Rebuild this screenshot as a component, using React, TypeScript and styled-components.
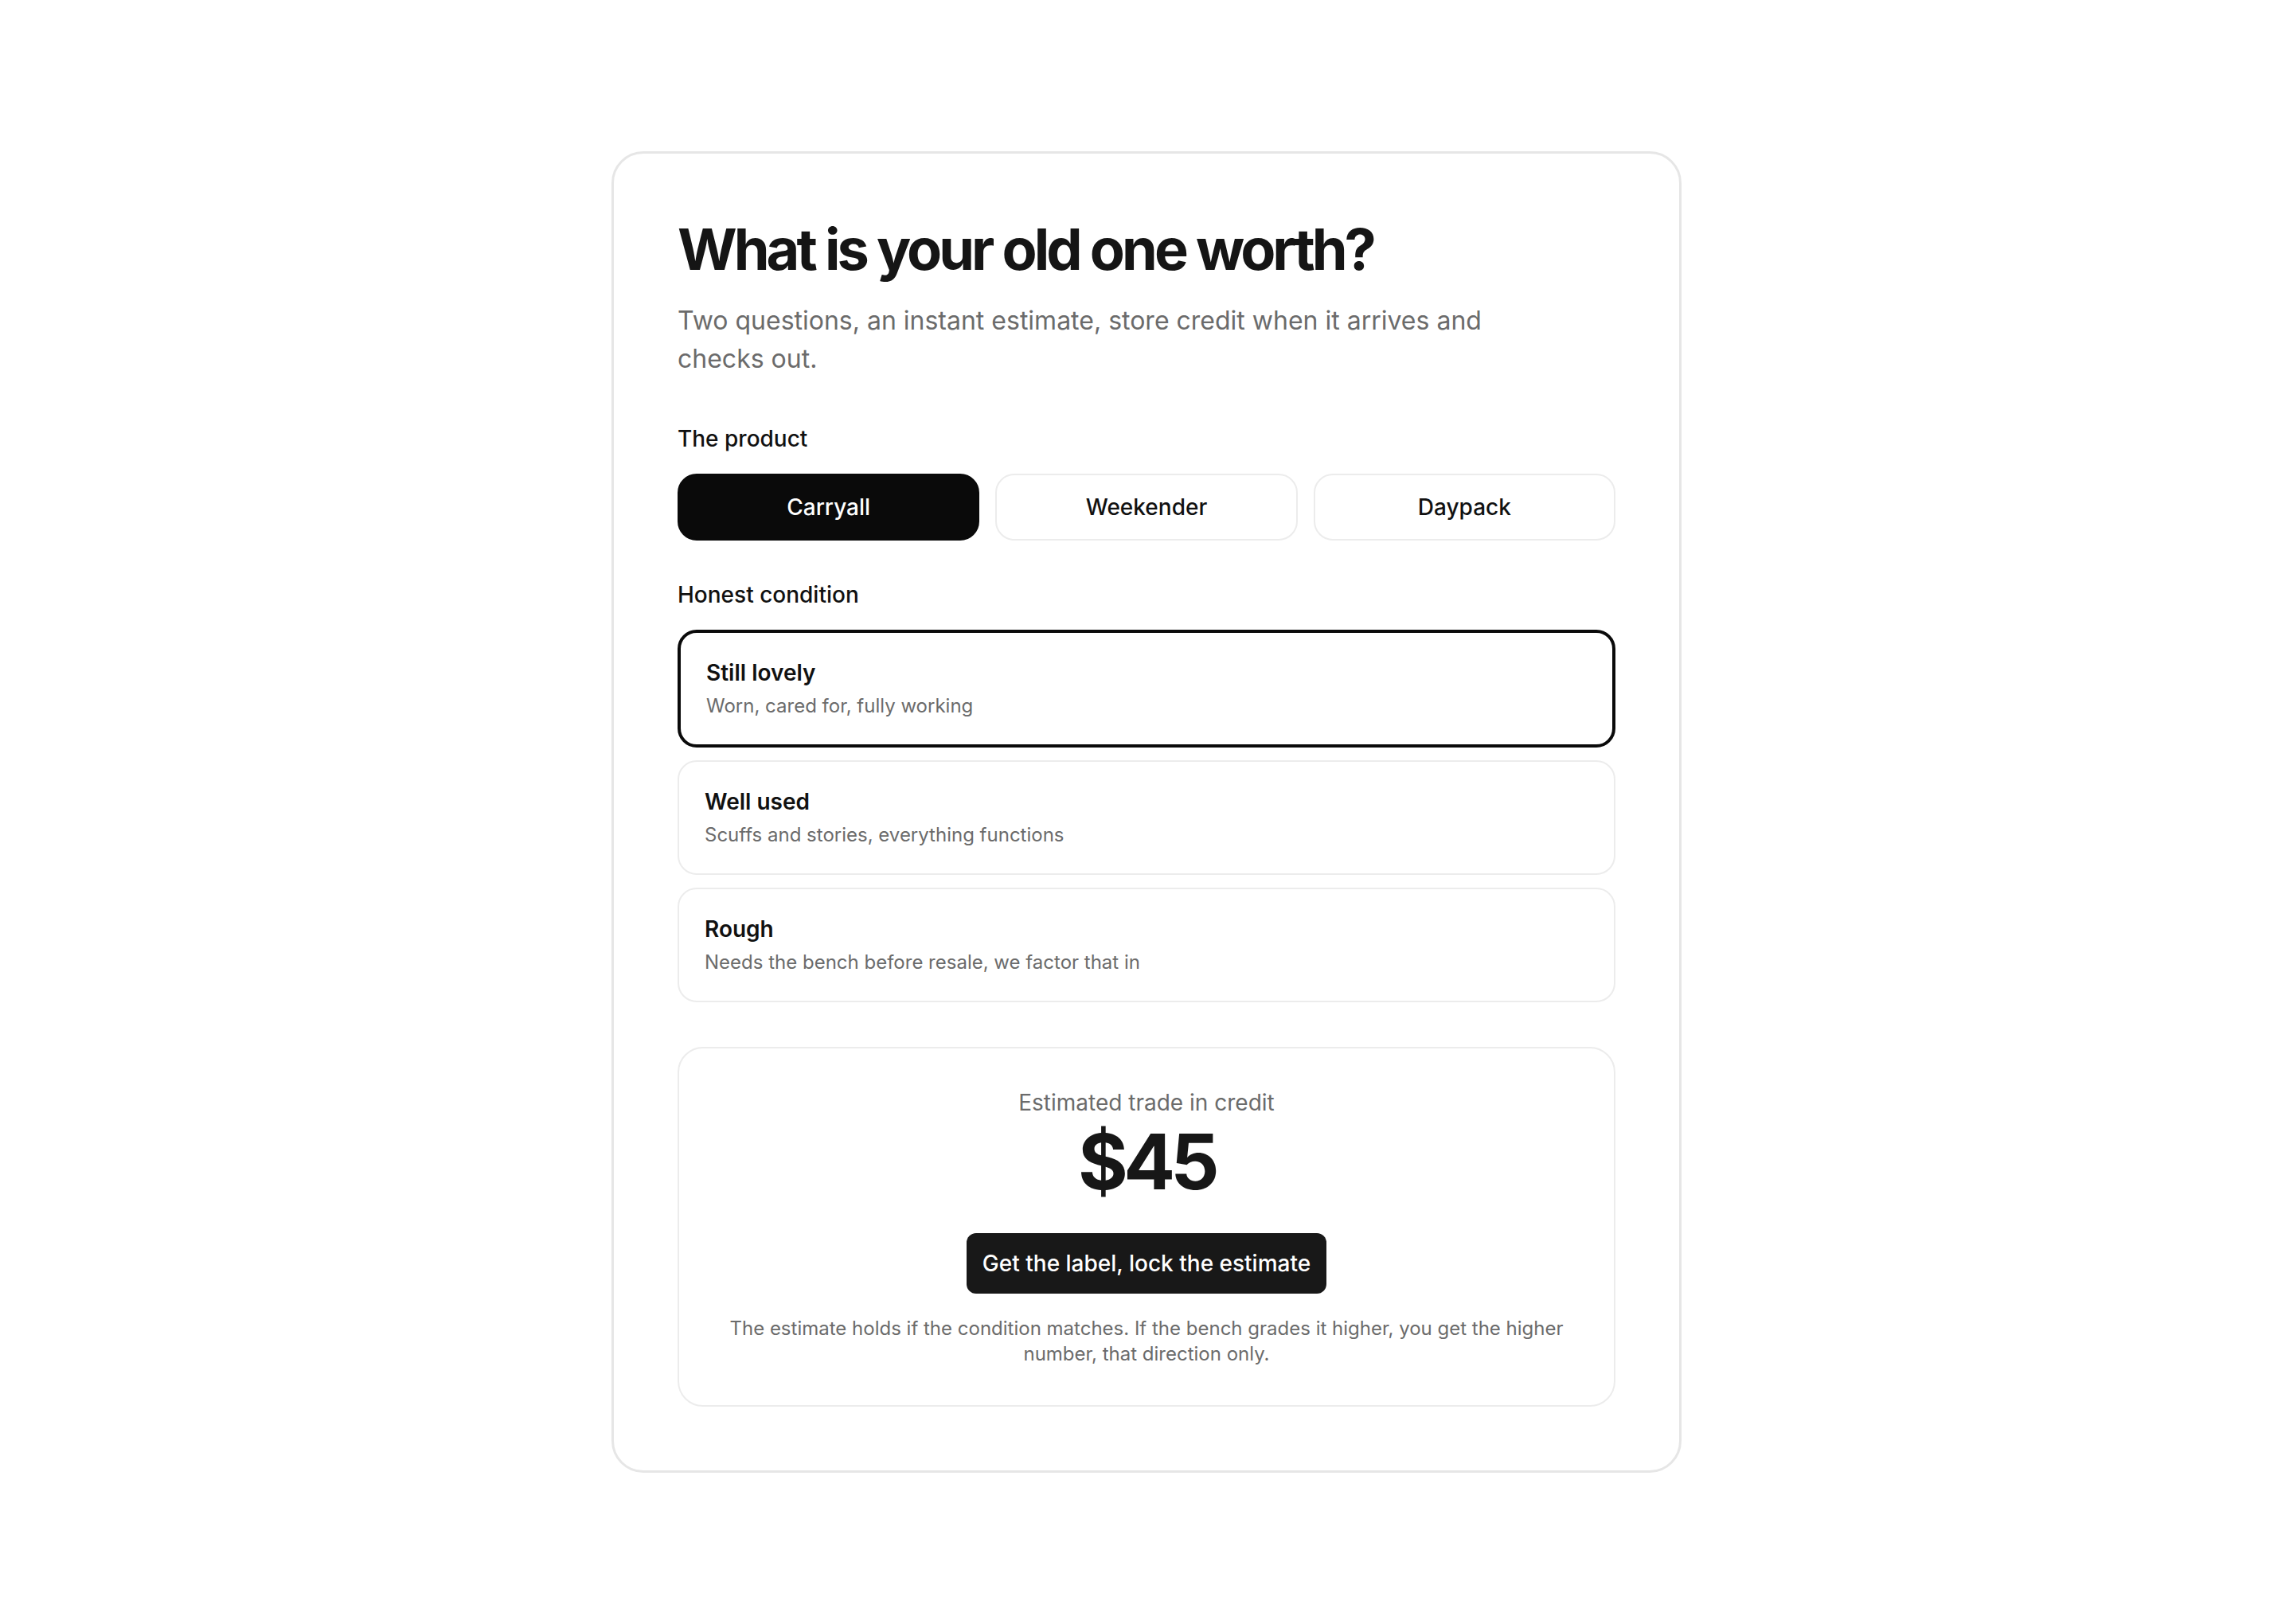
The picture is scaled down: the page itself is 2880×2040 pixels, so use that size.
import React, { useState } from "react";
import styled, { createGlobalStyle } from "styled-components";

const GlobalStyle = createGlobalStyle`
  * { box-sizing: border-box; }
  html, body {
    margin: 0;
    padding: 0;
    background: #ffffff;
    font-family: Inter, "Noto Sans", sans-serif;
    color: #111111;
  }
`;

const products = ["Carryall", "Weekender", "Daypack"];

const conditions = [
  { title: "Still lovely", text: "Worn, cared for, fully working", value: 45 },
  { title: "Well used", text: "Scuffs and stories, everything functions", value: 30 },
  { title: "Rough", text: "Needs the bench before resale, we factor that in", value: 15 },
];

const App = () => {
  const [product, setProduct] = useState<string>("Carryall");
  const [condition, setCondition] = useState<number>(0);

  return (
    <Page>
      <GlobalStyle />
      <Card>
        <Title>What is your old one worth?</Title>
        <Lead>
          Two questions, an instant estimate, store credit when it arrives and
          checks out.
        </Lead>

        <Section>
          <Label>The product</Label>
          <ProductRow>
            {products.map((p) => (
              <ProductButton
                key={p}
                type="button"
                $active={p === product}
                onClick={() => setProduct(p)}
              >
                {p}
              </ProductButton>
            ))}
          </ProductRow>
        </Section>

        <Section>
          <Label>Honest condition</Label>
          <ConditionList>
            {conditions.map((c, i) => (
              <ConditionCard
                key={c.title}
                type="button"
                $active={i === condition}
                onClick={() => setCondition(i)}
              >
                <ConditionTitle>{c.title}</ConditionTitle>
                <ConditionText>{c.text}</ConditionText>
              </ConditionCard>
            ))}
          </ConditionList>
        </Section>

        <Estimate>
          <EstimateLabel>Estimated trade in credit</EstimateLabel>
          <Amount>${conditions[condition].value}</Amount>
          <CtaButton type="button">Get the label, lock the estimate</CtaButton>
          <Note>
            The estimate holds if the condition matches. If the bench grades it
            higher, you get the higher number, that direction only.
          </Note>
        </Estimate>
      </Card>
    </Page>
  );
};

const Page = styled.div`
  min-height: 100vh;
  display: flex;
  align-items: center;
  justify-content: center;
`;

const Card = styled.div`
  width: 1344px;
  padding: 80px;
  border: 3px solid #e6e6e6;
  border-radius: 40px;
  background: #fff;
  display: flex;
  flex-direction: column;
`;

const Title = styled.h1`
  margin: 0;
  font-size: 72px;
  line-height: 1.1;
  font-weight: 700;
  letter-spacing: -0.055em;
  color: #151515;
`;

const Lead = styled.p`
  margin: 27px 0 0;
  max-width: 1080px;
  font-size: 32px;
  line-height: 48px;
  color: #6b6b6b;
`;

const Section = styled.div`
  margin-top: 56px;
  display: flex;
  flex-direction: column;
  gap: 24px;

  & + & {
    margin-top: 48px;
  }
`;

const Label = styled.div`
  font-size: 28px;
  line-height: 40px;
  font-weight: 500;
  color: #111;
`;

const ProductRow = styled.div`
  display: grid;
  grid-template-columns: repeat(3, 1fr);
  gap: 20px;
`;

const ProductButton = styled.button<{ $active: boolean }>`
  height: 84px;
  border-radius: 24px;
  border: 2px solid ${(p) => (p.$active ? "#0a0a0a" : "#ececec")};
  background: ${(p) => (p.$active ? "#0a0a0a" : "#fff")};
  color: ${(p) => (p.$active ? "#fff" : "#111")};
  font-family: inherit;
  font-size: 28px;
  font-weight: 500;
  cursor: pointer;
`;

const ConditionList = styled.div`
  display: flex;
  flex-direction: column;
  gap: 16px;
`;

const ConditionCard = styled.button<{ $active: boolean }>`
  display: flex;
  flex-direction: column;
  align-items: flex-start;
  gap: 4px;
  text-align: left;
  padding: 30px 32px;
  border-radius: 24px;
  border: ${(p) => (p.$active ? "4px solid #0a0a0a" : "2px solid #ececec")};
  background: #fff;
  font-family: inherit;
  cursor: pointer;
`;

const ConditionTitle = styled.span`
  font-size: 28px;
  line-height: 40px;
  font-weight: 600;
  color: #111;
`;

const ConditionText = styled.span`
  font-size: 24px;
  line-height: 36px;
  color: #6b6b6b;
`;

const Estimate = styled.div`
  margin-top: 56px;
  padding: 48px 48px 48px;
  border: 2px solid #ececec;
  border-radius: 32px;
  display: flex;
  flex-direction: column;
  align-items: center;
  text-align: center;
`;

const EstimateLabel = styled.div`
  font-size: 28px;
  line-height: 40px;
  color: #6b6b6b;
`;

const Amount = styled.div`
  margin-top: 2px;
  font-size: 96px;
  line-height: 1.1;
  font-weight: 700;
  letter-spacing: -0.06em;
  color: #171717;
`;

const CtaButton = styled.button`
  margin-top: 36px;
  height: 76px;
  padding: 0 20px;
  border: none;
  border-radius: 12px;
  background: #181818;
  color: #fff;
  font-family: inherit;
  font-size: 28px;
  font-weight: 500;
  cursor: pointer;
`;

const Note = styled.p`
  margin: 28px 0 0;
  font-size: 24px;
  line-height: 32px;
  color: #6b6b6b;
`;

export default App;
